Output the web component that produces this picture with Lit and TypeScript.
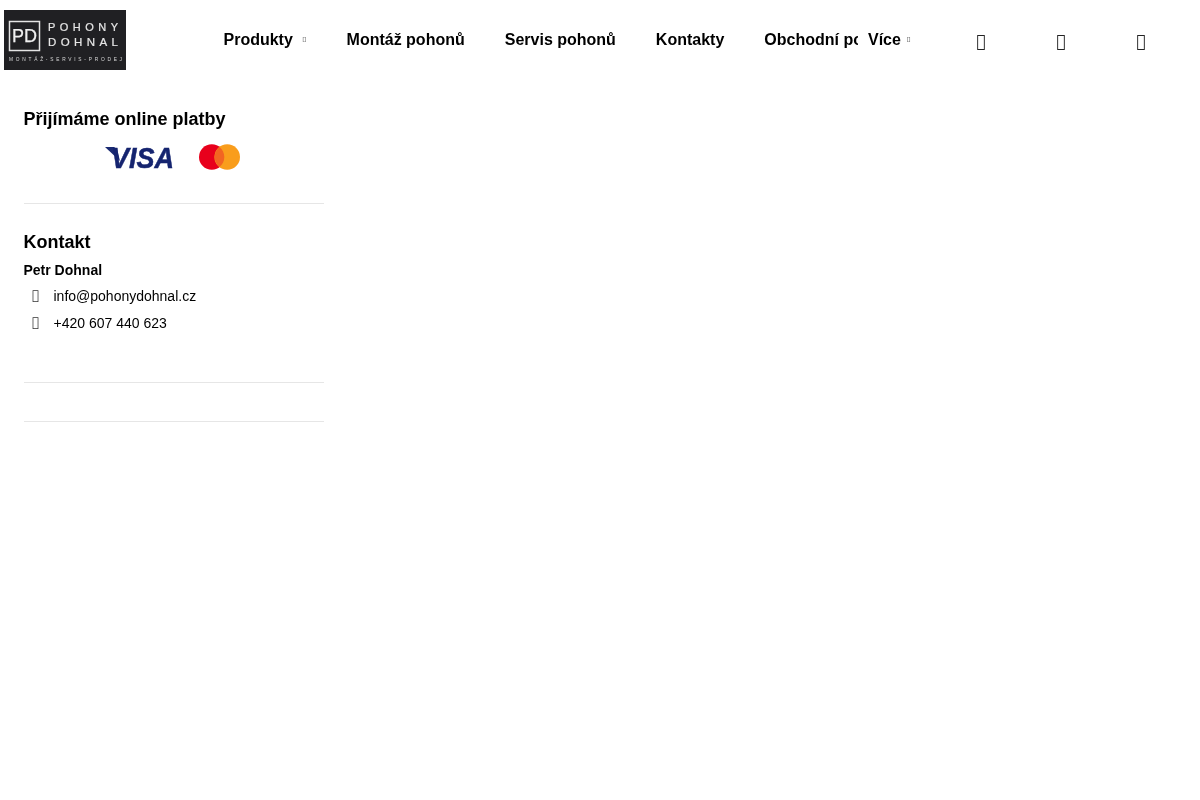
import { LitElement, html, css } from "lit";
import { customElement } from "lit/decorators.js";

@customElement("app-root")
export class AppRoot extends LitElement {
  static styles = css`
    :host { display: block; height: 800px; color: #000; font-family: "Liberation Sans", Arial, sans-serif; overflow: hidden; will-change: transform; }
    .header { display: flex; align-items: center; height: 80px; padding-left: 4px; }
    .logo { flex: none; width: 122px; height: 60px; display: block; filter: blur(0.35px); }
    .nav-wrap { margin-left: 97.5px; width: 717.5px; display: flex; flex: none; }
    .nav { width: 634.5px; overflow: hidden; display: flex; flex: none; white-space: nowrap; font-size: 16px; font-weight: 700; line-height: 18px; margin-top: -1px; }
    .nav span.item { flex: none; margin-right: 40px; display: flex; align-items: center; }
    .caret { font-size: 7px; font-weight: 400; line-height: 18px; margin-left: 9.5px; color: #333; font-family: "Noto Sans", sans-serif; }
    .more { flex: none; display: flex; align-items: center; font-size: 16px; font-weight: 700; line-height: 18px; margin-left: 10px; margin-top: -1px; }
    .more .caret { margin-left: 5.5px; }
    .tools { display: flex; flex: none; }
    .tool { width: 80px; height: 24px; text-align: center; font-family: "Noto Sans", sans-serif; font-size: 18px; line-height: 24px; color: #222; margin-top: 3px; transform: scaleY(1.16); }
    .side { width: 300px; margin-left: 23.5px; padding-top: 28px; }
    h2 { margin: 0; font-size: 18px; line-height: 22px; font-weight: 700; }
    .cards { display: flex; align-items: center; gap: 24px; padding: 4px 0 2px 81.5px; height: 52px; box-sizing: border-box; }
    .rule { border: 0; border-top: 1px solid #e6e6e6; margin: 0; }
    .r1 { margin-top: 21px; }
    .contact { padding-top: 27px; }
    .name { font-size: 14px; font-weight: 700; line-height: 16px; margin-top: 9px; }
    .row { display: flex; align-items: center; height: 16px; font-size: 14px; line-height: 16px; margin-top: 11px; }
    .name + .row { margin-top: 10px; }
    .row i { width: 30px; height: 16px; line-height: 16px; padding-left: 8px; box-sizing: border-box; font-style: normal; font-family: "Noto Sans", sans-serif; flex: none; color: #333; transform: scaleY(1.16); }
    .r2 { margin-top: 51px; }
    .r3 { margin-top: 38px; }
  `;

  render() {
    return html`
      <div class="header">
        <svg class="logo" viewBox="0 0 122 60" role="img" aria-label="Pohony Dohnal">
          <rect width="122" height="60" fill="#202023"/>
          <rect x="5.5" y="11.5" width="30" height="29" fill="none" stroke="#e4e4e4" stroke-width="1.5"/>
          <text x="20.5" y="32" text-anchor="middle" font-family="Liberation Sans" font-size="18" fill="#f0f0f0" stroke="#f0f0f0" stroke-width="0.25" textLength="25" lengthAdjust="spacingAndGlyphs">PD</text>
          <text x="44" y="21" font-family="Liberation Sans" font-size="11" fill="#e6e6e6" stroke="#e6e6e6" stroke-width="0.2" textLength="70" lengthAdjust="spacing">POHONY</text>
          <text x="44" y="36" font-family="Liberation Sans" font-size="11.5" fill="#e6e6e6" stroke="#e6e6e6" stroke-width="0.2" textLength="70" lengthAdjust="spacing">DOHNAL</text>
          <text x="5" y="51" font-family="Liberation Sans" font-weight="400" font-size="4.8" fill="#d8d8d8" textLength="113" lengthAdjust="spacing">MONTÁŽ-SERVIS-PRODEJ</text>
        </svg>
        <div class="nav-wrap">
          <div class="nav">
            <span class="item">Produkty<span class="caret">&#xf107;</span></span>
            <span class="item">Montáž pohonů</span>
            <span class="item">Servis pohonů</span>
            <span class="item">Kontakty</span>
            <span class="item">Obchodní podmínky</span>
          </div>
          <div class="more">Více<span class="caret">&#xf107;</span></div>
        </div>
        <div class="tools">
          <span class="tool">&#xf010;</span>
          <span class="tool">&#xf007;</span>
          <span class="tool">&#xf07a;</span>
        </div>
      </div>
      <div class="side">
        <h2>Přijímáme online platby</h2>
        <div class="cards">
          <svg width="70" height="26" viewBox="0 0 70 26" role="img" aria-label="Visa">
            <path d="M0 3h9l3 2 3 12z" fill="#1a2a72"/>
            <text x="6" y="24" font-family="Liberation Sans" font-weight="700" font-style="italic" font-size="29" fill="#15246f" stroke="#15246f" stroke-width="0.5" textLength="63" lengthAdjust="spacingAndGlyphs">VISA</text>
          </svg>
          <svg width="42" height="26" viewBox="0 0 42 26" role="img" aria-label="Mastercard">
            <circle cx="12.8" cy="13" r="12.8" fill="#e8001c"/>
            <circle cx="28.2" cy="13" r="12.8" fill="#f99d1c"/>
            <path d="M20.5 3a12.8 12.8 0 0 1 0 20a12.8 12.8 0 0 1 0-20z" fill="#f26522"/>
          </svg>
        </div>
        <hr class="rule r1" />
        <div class="contact">
          <h2>Kontakt</h2>
          <div class="name">Petr Dohnal</div>
          <div class="row"><i>&#xf0e0;</i>info@pohonydohnal.cz</div>
          <div class="row"><i>&#xf095;</i>+420 607 440 623</div>
        </div>
        <hr class="rule r2" />
        <hr class="rule r3" />
      </div>
    `;
  }
}
